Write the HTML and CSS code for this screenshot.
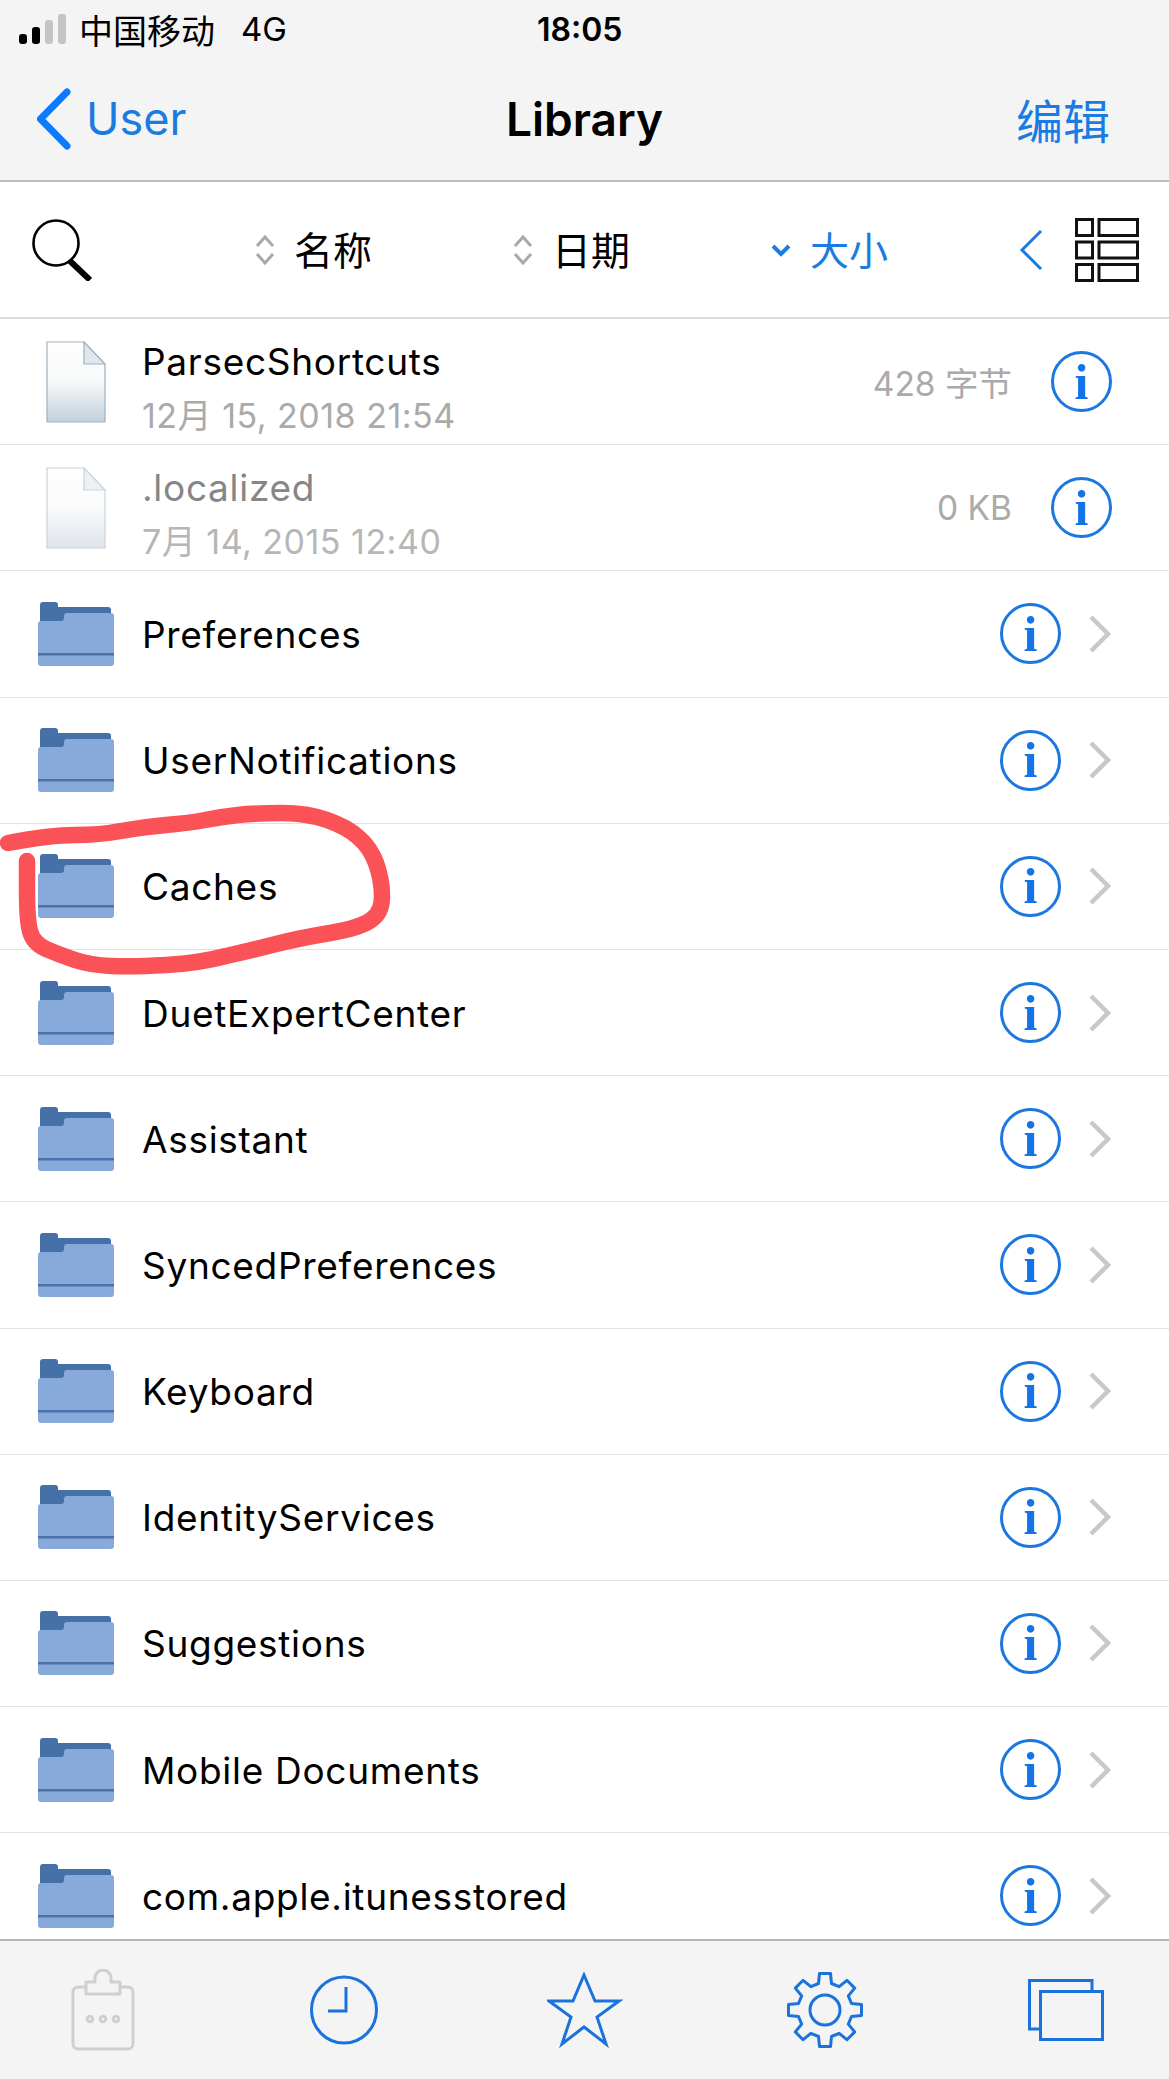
FILE: index.html
```html
<!DOCTYPE html>
<html lang="en">
<head>
    <meta charset="UTF-8">
    <meta name="viewport" content="width=device-width, initial-scale=1.0">
    <title>Library</title>
    <link rel="stylesheet" href="styles.css">
</head>
<body>
    <svg class="defs" width="0" height="0">
        <defs>
            <linearGradient id="docFill" x1="0" y1="0" x2="0" y2="1">
                <stop offset="0" stop-color="#ffffff"/>
                <stop offset="0.5" stop-color="#f6f8f9"/>
                <stop offset="1" stop-color="#c3d0da"/>
            </linearGradient>
            <symbol id="folder" viewBox="0 0 76 64">
                <path fill="#4570a8" d="M2 17V3a3 3 0 0 1 3-3h12a3 3 0 0 1 3 3v2h50a3 3 0 0 1 3 3v8l-30 6H2z"/>
                <path fill="#88aadb" d="M0 22a3 3 0 0 1 3-3h20a3 3 0 0 0 3-3v-2a3 3 0 0 1 3-3h44a3 3 0 0 1 3 3v47a3 3 0 0 1-3 3H3a3 3 0 0 1-3-3z"/>
                <rect fill="#4a72ab" x="0" y="51" width="76" height="2.5"/>
            </symbol>
            <symbol id="doc" viewBox="0 0 60 82">
                <path fill="url(#docFill)" stroke="#9db1c0" stroke-width="1.2" d="M1 1h37l21 22v58H1z"/>
                <path fill="#dfe7ec" stroke="#9db1c0" stroke-width="1.2" d="M38 1v22h21z"/>
            </symbol>
            <symbol id="chevron" viewBox="0 0 24 38">
                <path fill="none" stroke="#c8c8cc" stroke-width="4.5" d="M3 2l17 17L3 36"/>
            </symbol>
            <symbol id="updown" viewBox="0 0 20 32">
                <path fill="none" stroke="#a9a9a9" stroke-width="3" d="M2 12l8-9 8 9M2 20l8 9 8-9"/>
            </symbol>
        </defs>
    </svg>

    <div class="screen">
        <header class="top">
            <div class="status">
                <span class="signal"><i class="on s1"></i><i class="on s2"></i><i class="s3"></i><i class="s4"></i></span>
                <span class="carrier">中国移动</span>
                <span class="network">4G</span>
                <span class="clock">18:05</span>
            </div>
            <nav class="nav">
                <a class="back">
                    <svg width="36" height="62" viewBox="0 0 36 62"><path fill="none" stroke="#0a7aff" stroke-width="7" stroke-linecap="round" stroke-linejoin="round" d="M30 4L3.5 31 30 58"/></svg>
                    <span>User</span>
                </a>
                <h1>Library</h1>
                <a class="edit">编辑</a>
            </nav>
        </header>

        <div class="toolbar">
            <svg class="search" width="60" height="62" viewBox="0 0 60 62">
                <circle cx="24" cy="24" r="22.5" fill="none" stroke="#000" stroke-width="2.6"/>
                <path stroke="#000" stroke-width="6" d="M38 42l20 19"/>
            </svg>
            <div class="sort sort-name">
                <svg width="20" height="32"><use href="#updown"/></svg>
                <span>名称</span>
            </div>
            <div class="sort sort-date">
                <svg width="20" height="32"><use href="#updown"/></svg>
                <span>日期</span>
            </div>
            <div class="sort sort-size active">
                <svg width="20" height="14" viewBox="0 0 20 14"><path fill="none" stroke="#1a7ce0" stroke-width="4" d="M2 3l8 8 8-8"/></svg>
                <span>大小</span>
            </div>
            <svg class="collapse" width="24" height="40" viewBox="0 0 24 40"><path fill="none" stroke="#1a7ce0" stroke-width="3" d="M22 1L3 20l19 19"/></svg>
            <svg class="layout" width="64" height="64" viewBox="0 0 64 64" fill="none" stroke="#111" stroke-width="3">
                <rect x="1.5" y="1.5" width="16" height="16"/><rect x="24" y="1.5" width="38.5" height="16"/>
                <rect x="1.5" y="24" width="16" height="16"/><rect x="24" y="24" width="38.5" height="16"/>
                <rect x="1.5" y="46.5" width="16" height="16"/><rect x="24" y="46.5" width="38.5" height="16"/>
            </svg>
        </div>

        <div class="list">
            <div class="row file">
                <svg class="icon" width="76" height="82"><use href="#doc" x="8" width="60" height="82"/></svg>
                <div class="text">
                    <div class="name">ParsecShortcuts</div>
                    <div class="date">12月 15, 2018 21:54</div>
                </div>
                <span class="size">428 字节</span>
                <span class="info">i</span>
            </div>
            <div class="row file hidden-file">
                <svg class="icon" width="76" height="82"><use href="#doc" x="8" width="60" height="82"/></svg>
                <div class="text">
                    <div class="name">.localized</div>
                    <div class="date">7月 14, 2015 12:40</div>
                </div>
                <span class="size">0 KB</span>
                <span class="info">i</span>
            </div>
            <div class="row">
                <svg class="icon" width="76" height="64"><use href="#folder"/></svg>
                <div class="text"><div class="name">Preferences</div></div>
                <span class="info">i</span>
                <svg class="arrow" width="24" height="38"><use href="#chevron"/></svg>
            </div>
            <div class="row">
                <svg class="icon" width="76" height="64"><use href="#folder"/></svg>
                <div class="text"><div class="name">UserNotifications</div></div>
                <span class="info">i</span>
                <svg class="arrow" width="24" height="38"><use href="#chevron"/></svg>
            </div>
            <div class="row">
                <svg class="icon" width="76" height="64"><use href="#folder"/></svg>
                <div class="text"><div class="name">Caches</div></div>
                <span class="info">i</span>
                <svg class="arrow" width="24" height="38"><use href="#chevron"/></svg>
            </div>
            <div class="row">
                <svg class="icon" width="76" height="64"><use href="#folder"/></svg>
                <div class="text"><div class="name">DuetExpertCenter</div></div>
                <span class="info">i</span>
                <svg class="arrow" width="24" height="38"><use href="#chevron"/></svg>
            </div>
            <div class="row">
                <svg class="icon" width="76" height="64"><use href="#folder"/></svg>
                <div class="text"><div class="name">Assistant</div></div>
                <span class="info">i</span>
                <svg class="arrow" width="24" height="38"><use href="#chevron"/></svg>
            </div>
            <div class="row">
                <svg class="icon" width="76" height="64"><use href="#folder"/></svg>
                <div class="text"><div class="name">SyncedPreferences</div></div>
                <span class="info">i</span>
                <svg class="arrow" width="24" height="38"><use href="#chevron"/></svg>
            </div>
            <div class="row">
                <svg class="icon" width="76" height="64"><use href="#folder"/></svg>
                <div class="text"><div class="name">Keyboard</div></div>
                <span class="info">i</span>
                <svg class="arrow" width="24" height="38"><use href="#chevron"/></svg>
            </div>
            <div class="row">
                <svg class="icon" width="76" height="64"><use href="#folder"/></svg>
                <div class="text"><div class="name">IdentityServices</div></div>
                <span class="info">i</span>
                <svg class="arrow" width="24" height="38"><use href="#chevron"/></svg>
            </div>
            <div class="row">
                <svg class="icon" width="76" height="64"><use href="#folder"/></svg>
                <div class="text"><div class="name">Suggestions</div></div>
                <span class="info">i</span>
                <svg class="arrow" width="24" height="38"><use href="#chevron"/></svg>
            </div>
            <div class="row">
                <svg class="icon" width="76" height="64"><use href="#folder"/></svg>
                <div class="text"><div class="name">Mobile Documents</div></div>
                <span class="info">i</span>
                <svg class="arrow" width="24" height="38"><use href="#chevron"/></svg>
            </div>
            <div class="row">
                <svg class="icon" width="76" height="64"><use href="#folder"/></svg>
                <div class="text"><div class="name">com.apple.itunesstored</div></div>
                <span class="info">i</span>
                <svg class="arrow" width="24" height="38"><use href="#chevron"/></svg>
            </div>
        </div>

        <footer class="tabs">
            <svg width="76" height="82" viewBox="0 0 76 82" fill="none" stroke="#cfcfcf" stroke-width="3">
                <path stroke-linejoin="round" d="M21 18H13a5 5 0 0 0-5 5v52a5 5 0 0 0 5 5h50a5 5 0 0 0 5-5V23a5 5 0 0 0-5-5h-8"/>
                <path stroke-linejoin="round" d="M21 25V13h9V9a8 8 0 0 1 16 0v4h9v12z"/>
                <circle cx="25" cy="50" r="2.8"/><circle cx="38" cy="50" r="2.8"/><circle cx="51" cy="50" r="2.8"/>
            </svg>
            <svg width="76" height="70" viewBox="0 0 76 70" fill="none" stroke="#1a73dc" stroke-width="3">
                <ellipse cx="38" cy="35" rx="32.5" ry="33"/>
                <path d="M40 12v24H22"/>
            </svg>
            <svg width="76" height="76" viewBox="0 0 76 76" fill="none" stroke="#1a73dc" stroke-width="3">
                <path d="M37 3l11 26h24L50 45l9 27-22-17-22 17 9-27L2 29h24z"/>
            </svg>
            <svg width="76" height="76" viewBox="-38 -38 76 76" fill="none" stroke="#1a73dc" stroke-width="3" stroke-linejoin="round">
                <path d="M-6.5-26.5L-5.5-36.5H5.5L6.5-26.5L14.14-23.33L21.92-29.7L29.7-21.92L23.33-14.14L26.5-6.5L36.5-5.5V5.5L26.5 6.5L23.33 14.14L29.7 21.92L21.92 29.7L14.14 23.33L6.5 26.5L5.5 36.5H-5.5L-6.5 26.5L-14.14 23.33L-21.92 29.7L-29.7 21.92L-23.33 14.14L-26.5 6.5L-36.5 5.5V-5.5L-26.5-6.5L-23.33-14.14L-29.7-21.92L-21.92-29.7L-14.14-23.33Z"/>
                <circle r="15"/>
            </svg>
            <svg width="76" height="62" viewBox="0 0 76 62" fill="none" stroke="#1a73dc" stroke-width="3">
                <path d="M12 50H1.5V1.5H64V12"/>
                <rect x="12.5" y="12.5" width="62" height="48"/>
            </svg>
        </footer>

        <svg class="scribble" width="1169" height="2079" viewBox="0 0 1169 2079">
            <path d="M8 843Q50 835 75 835Q100 835 121 831Q143 827 166 825Q190 823 205 820Q220 817 238 815Q257 813 282 813Q307 813 327 820Q347 827 358 837Q370 847 376 863Q382 880 382 896Q382 913 371 920Q360 928 330 933Q300 938 276 944Q253 950 226 956Q200 963 166 965Q133 967 111 966Q90 965 75 960Q60 955 46 949Q33 943 30 931Q27 920 27 890L27 861"/>
        </svg>
    </div>
</body>
</html>
```

FILE: styles.css
```css
body {
    margin: 0;
    background-color: #fff;
    color: #000;
    font-family: Inter, "Noto Sans CJK SC", sans-serif;
}

.defs {
    position: absolute;
}

.screen {
    position: relative;
    display: flex;
    flex-direction: column;
    width: 1169px;
    height: 2079px;
    overflow: hidden;
}

/* top bars */
.top {
    flex: none;
    height: 182px;
    background-color: #f4f4f5;
    border-bottom: 2px solid #bcbcbc;
    box-sizing: border-box;
}

.status {
    display: flex;
    align-items: center;
    height: 58px;
    padding-left: 19px;
    font-size: 33px;
    position: relative;
}

.signal {
    display: flex;
    align-items: flex-end;
    gap: 5px;
    height: 30px;
    margin-right: 13px;
}

.signal i {
    display: block;
    width: 8px;
    background-color: #c4c4c4;
    border-radius: 3px;
}

.signal .on {
    background-color: #000;
}

.s1 { height: 10px; }
.s2 { height: 17px; }
.s3 { height: 24px; }
.s4 { height: 30px; }

.carrier {
    font-family: "Noto Sans CJK SC", sans-serif;
    font-size: 34px;
}

.network {
    margin-left: 26px;
    font-size: 33px;
}

.clock {
    position: absolute;
    left: 537px;
    font-size: 32px;
    font-weight: 600;
}

.nav {
    display: grid;
    grid-template-columns: 1fr auto 1fr;
    align-items: center;
    height: 121px;
    padding: 0 37px;
}

.nav h1 {
    margin: 0;
    font-size: 46px;
    font-weight: 600;
}

.back {
    display: flex;
    align-items: center;
    gap: 13px;
    color: #1a7ce0;
    font-size: 45px;
}

.edit {
    justify-self: end;
    margin-right: 22px;
    color: #1a7ce0;
    font-family: "Noto Sans CJK SC", sans-serif;
    font-size: 47px;
}

/* sort toolbar */
.toolbar {
    flex: none;
    display: flex;
    align-items: center;
    height: 137px;
    padding: 0 30px 0 32px;
    box-sizing: border-box;
    border-bottom: 2px solid #dcdcdc;
    font-family: "Noto Sans CJK SC", sans-serif;
    font-size: 39px;
}

.sort {
    display: flex;
    align-items: center;
    gap: 19px;
}

.sort span {
    margin-bottom: 4px;
}

.sort-name { margin-left: 163px; }
.sort-date { margin-left: 141px; }
.sort-size { margin-left: 141px; }

.sort.active {
    color: #1a7ce0;
}

.collapse {
    margin-left: auto;
    margin-right: 32px;
}

/* file list */
.list {
    flex: 1;
    min-height: 0;
    overflow: hidden;
}

.row {
    display: flex;
    align-items: center;
    height: 126.2px;
    padding: 0 57px 0 38px;
    box-sizing: border-box;
    border-bottom: 1.5px solid #e2e2e2;
}

.icon {
    flex: none;
    margin-right: 28px;
}

.text {
    flex: 1;
    padding-top: 2px;
}

.file .text {
    padding-top: 14px;
}

.name {
    font-size: 37px;
    letter-spacing: 0.7px;
    line-height: 44px;
}

.date {
    margin-top: 10px;
    color: #aaa;
    font-size: 34px;
    letter-spacing: 0.5px;
    line-height: 44px;
}

.size {
    margin-right: 39px;
    color: #aaa;
    font-size: 33.5px;
}

.hidden-file .icon {
    opacity: 0.55;
}

.hidden-file .name {
    color: #868686;
}

.hidden-file .date {
    color: #b6b6b6;
}

.info {
    flex: none;
    display: flex;
    align-items: center;
    justify-content: center;
    width: 61px;
    height: 61px;
    box-sizing: border-box;
    border: 3px solid #1c78e0;
    border-radius: 50%;
    color: #1473e6;
    font-family: "Liberation Serif", serif;
    font-size: 50px;
    font-weight: 700;
}

.arrow {
    flex: none;
    margin-left: 27px;
}

/* bottom tabs */
.tabs {
    flex: none;
    display: flex;
    align-items: center;
    justify-content: space-between;
    height: 140px;
    padding: 0 65px;
    box-sizing: border-box;
    background-color: #f4f4f5;
    border-top: 2px solid #b4b4b4;
}

/* red marker drawn over the screenshot */
.scribble {
    position: absolute;
    top: 0;
    left: 0;
    pointer-events: none;
}

.scribble path {
    fill: none;
    stroke: #fb5257;
    stroke-width: 16.5;
    stroke-linecap: round;
    stroke-linejoin: round;
}
```
